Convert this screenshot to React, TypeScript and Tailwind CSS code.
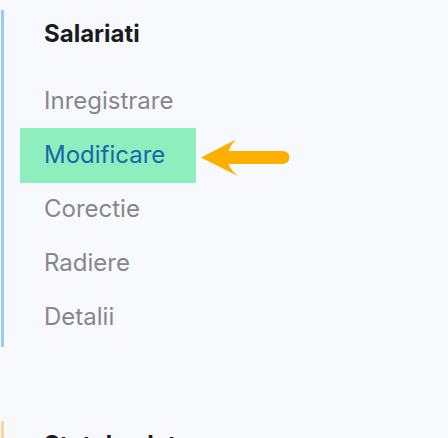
import React from "react";

const font = { fontFamily: "Inter, 'Noto Sans', sans-serif" };

type Section = {
  title: string;
  bar: string;
  items: string[];
  active?: string;
};

const sections: Section[] = [
  {
    title: "Salariati",
    bar: "border-[#9ccaf3]",
    items: ["Inregistrare", "Modificare", "Corectie", "Radiere", "Detalii"],
    active: "Modificare",
  },
  {
    title: "Stat de plata",
    bar: "border-[#fbd59e]",
    items: ["Generare", "Vizualizare"],
  },
];

function PointerArrow() {
  return (
    <svg width="90" height="40" viewBox="0 0 90 40" className="mt-[6px] shrink-0">
      <path
        d="M1 19.5 L36 1.5 Q30 8 28.5 13 L83 13 A6.5 6.5 0 0 1 83 26 L28.5 26 Q30 31 38 38 Z"
        fill="#fbb000"
      />
    </svg>
  );
}

export default function App() {
  return (
    <div className="min-h-screen bg-[#f8f9fd] pt-[10px]" style={font}>
      <div className="flex flex-col gap-[74px]">
        {sections.map((s) => (
          <section key={s.title} className={`ml-px border-l-[3px] pb-[3px] ${s.bar}`}>
            <h2 className="mt-[6px] pl-[40px] text-[24px] leading-[36px] font-bold text-[#1b1b1d]">
              {s.title}
            </h2>
            <ul className="mt-[22px]">
              {s.items.map((item) =>
                item === s.active ? (
                  <li key={item} className="flex h-[54px] items-center gap-[4px]">
                    <div className="ml-[16px] flex h-[55px] w-44 items-center bg-[#8eeebd] pl-6 text-[24px] text-[#1767ac]">
                      {item}
                    </div>
                    <PointerArrow />
                  </li>
                ) : (
                  <li
                    key={item}
                    className="ml-[16px] flex h-[54px] items-center pl-6 text-[24px] text-[#87878b]"
                  >
                    {item}
                  </li>
                )
              )}
            </ul>
          </section>
        ))}
      </div>
    </div>
  );
}
